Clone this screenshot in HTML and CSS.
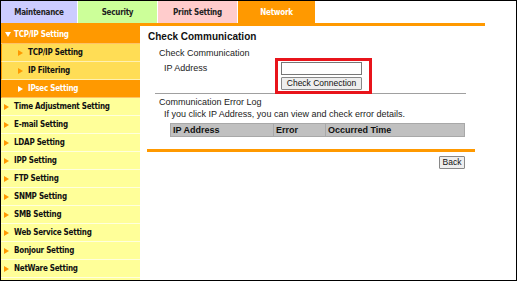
FILE: index.html
```html
<!DOCTYPE html>
<html lang="en">
<head>
    <meta charset="UTF-8">
    <title>Network - Check Communication</title>
    <link rel="stylesheet" href="styles.css">
</head>
<body>
    <div class="frame">
        <div class="tabs">
            <div class="tab tab-maintenance">Maintenance</div>
            <div class="tab tab-security">Security</div>
            <div class="tab tab-print">Print Setting</div>
            <div class="tab tab-network">Network</div>
        </div>
        <div class="tab-line"></div>
        <div class="layout">
            <div class="sidebar">
                <div class="side-row side-head"><span class="arrow-down"></span>TCP/IP Setting</div>
                <div class="side-row side-sub"><span class="arrow"></span>TCP/IP Setting</div>
                <div class="side-row side-sub"><span class="arrow"></span>IP Filtering</div>
                <div class="side-row side-sub active"><span class="arrow"></span>IPsec Setting</div>
                <div class="side-row"><span class="arrow"></span>Time Adjustment Setting</div>
                <div class="side-row"><span class="arrow"></span>E-mail Setting</div>
                <div class="side-row"><span class="arrow"></span>LDAP Setting</div>
                <div class="side-row"><span class="arrow"></span>IPP Setting</div>
                <div class="side-row"><span class="arrow"></span>FTP Setting</div>
                <div class="side-row"><span class="arrow"></span>SNMP Setting</div>
                <div class="side-row"><span class="arrow"></span>SMB Setting</div>
                <div class="side-row"><span class="arrow"></span>Web Service Setting</div>
                <div class="side-row"><span class="arrow"></span>Bonjour Setting</div>
                <div class="side-row"><span class="arrow"></span>NetWare Setting</div>
            </div>
            <div class="main">
                <h1 class="title">Check Communication</h1>
                <div class="section-title">Check Communication</div>
                <div class="form-row">
                    <div class="label">IP Address</div>
                    <div class="controls">
                        <input class="ip-input" type="text">
                        <button class="btn btn-check">Check Connection</button>
                        <div class="highlight"></div>
                    </div>
                </div>
                <div class="divider"></div>
                <div class="section-title">Communication Error Log</div>
                <div class="hint">If you click IP Address, you can view and check error details.</div>
                <table class="log-table">
                    <tr>
                        <th class="col-ip">IP Address</th>
                        <th class="col-error">Error</th>
                        <th>Occurred Time</th>
                    </tr>
                </table>
                <div class="orange-line"></div>
                <div class="actions">
                    <button class="btn btn-back">Back</button>
                </div>
            </div>
        </div>
    </div>
</body>
</html>
```
FILE: styles.css
```css
body {
    margin: 0;
    padding: 0;
    font-family: 'Liberation Sans', Arial, sans-serif;
    background: #ffffff;
}
.frame {
    width: 517px;
    height: 281px;
    border: 1px solid #000000;
    box-sizing: border-box;
    overflow: hidden;
    display: flex;
    flex-direction: column;
}
.tabs {
    display: flex;
    height: 22px;
}
.tab {
    display: flex;
    align-items: center;
    justify-content: center;
    font-family: 'DejaVu Sans Condensed', 'Liberation Sans', sans-serif;
    font-size: 8px;
    letter-spacing: -0.25px;
    font-weight: bold;
    color: #222222;
    border-right: 1px solid #ffffff;
    box-sizing: border-box;
}
.tab-maintenance {
    width: 77px;
    background: #ccccff;
}
.tab-security {
    width: 80px;
    background: #ccff99;
}
.tab-print {
    width: 80px;
    background: #ffcccc;
}
.tab-network {
    width: 78px;
    background: #ff9900;
    color: #ffffff;
}
.tab-line {
    width: 484px;
    height: 3px;
    background: #ff9900;
}
.layout {
    display: flex;
    flex: 1;
}
.sidebar {
    width: 139px;
    background: #ffff99;
}
.side-row {
    display: flex;
    align-items: center;
    height: 17px;
    border-bottom: 1px solid #ffffdd;
    padding-left: 3px;
    font-family: 'DejaVu Sans Condensed', 'Liberation Sans', sans-serif;
    font-size: 8px;
    letter-spacing: -0.25px;
    font-weight: bold;
    color: #111111;
}
.arrow {
    width: 0;
    height: 0;
    border-top: 3px solid transparent;
    border-bottom: 3px solid transparent;
    border-left: 5px solid #ff9900;
    margin-right: 5px;
}
.arrow-down {
    width: 0;
    height: 0;
    border-left: 3px solid transparent;
    border-right: 3px solid transparent;
    border-top: 5px solid #ffffff;
    margin-right: 3px;
}
.side-head {
    background: #ff9900;
    color: #ffffff;
    padding-left: 4px;
    border-bottom-color: #ffc266;
}
.side-sub {
    background: #ffdd55;
    padding-left: 16px;
    border-left: 1px solid #ff9900;
    border-bottom-color: #fff0b0;
}
.side-sub.active {
    background: #ff9900;
    color: #ffffff;
    border-bottom-color: #ffc266;
}
.side-sub.active .arrow {
    border-left-color: #ffffff;
}
.main {
    width: 328px;
    margin-left: 7px;
    padding-top: 5px;
    font-size: 9px;
    color: #222222;
}
.title {
    margin: 0 0 4px 1px;
    font-size: 10px;
    line-height: 12px;
    font-weight: bold;
    color: #111111;
}
.section-title {
    margin-left: 12px;
    line-height: 12px;
}
.form-row {
    display: flex;
    padding-top: 3px;
    margin-left: 17px;
}
.label {
    width: 117px;
    line-height: 12px;
}
.controls {
    position: relative;
    display: flex;
    flex-direction: column;
    gap: 2px;
    width: 81px;
}
.ip-input {
    width: 81px;
    height: 13px;
    margin: 0;
    padding: 0;
    border: 1px solid #777777;
    box-sizing: border-box;
    background: #ffffff;
}
.btn {
    height: 13px;
    margin: 0;
    padding: 0;
    border: 1px solid #888888;
    border-radius: 1px;
    background: #eeeeee;
    font-family: 'Liberation Sans', Arial, sans-serif;
    font-size: 8.5px;
    line-height: 11px;
    color: #111111;
    box-sizing: border-box;
}
.btn-check {
    width: 81px;
}
.highlight {
    position: absolute;
    left: -6px;
    top: -4px;
    width: 97px;
    height: 36px;
    border: 3px solid #e8141b;
    box-sizing: border-box;
}
.divider {
    width: 311px;
    height: 1px;
    margin: 3px 0 2px 8px;
    background: #a0a0a0;
}
.hint {
    margin-left: 17px;
    line-height: 12px;
}
.log-table {
    width: 295px;
    margin: 3px 0 0 23px;
    border-collapse: collapse;
    background: #c0c0c0;
    border: 1px solid #909090;
}
.log-table th {
    height: 12px;
    padding: 0 0 0 2px;
    text-align: left;
    font-size: 9px;
    line-height: 12px;
    font-weight: bold;
    color: #111111;
    border: 1px solid #a8a8a8;
}
.col-ip {
    width: 100px;
}
.col-error {
    width: 49px;
}
.orange-line {
    width: 328px;
    height: 3px;
    margin-top: 12px;
    background: #ff9900;
}
.actions {
    display: flex;
    justify-content: flex-end;
    margin-top: 4px;
    padding-right: 10px;
}
.btn-back {
    width: 26px;
    height: 13px;
}
```
